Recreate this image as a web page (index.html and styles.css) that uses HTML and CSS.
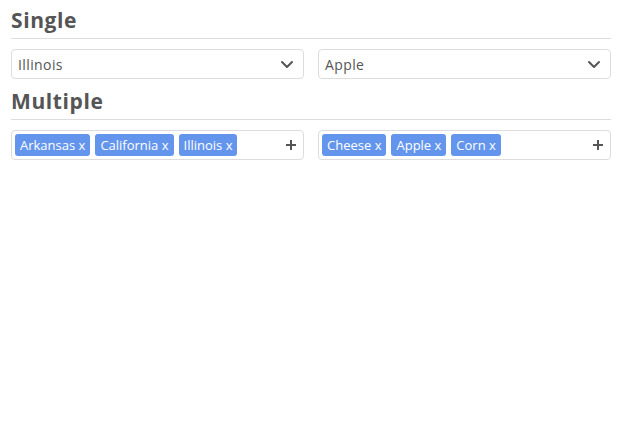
FILE: index.html
```html
<!DOCTYPE html>
<html>
<head>
<meta charset="utf-8">
<link rel="stylesheet" href="styles.css">
</head>
<body>
<main class="page">
  <h2 class="title">Single</h2>
  <div class="row">
    <div class="box select">
      <span class="value">Illinois</span>
      <svg class="chev" width="14" height="9" viewBox="0 0 14 9"><path d="M2 2 L7 7 L12 2" fill="none" stroke="#555" stroke-width="2" stroke-linecap="round" stroke-linejoin="round"/></svg>
    </div>
    <div class="box select">
      <span class="value">Apple</span>
      <svg class="chev" width="14" height="9" viewBox="0 0 14 9"><path d="M2 2 L7 7 L12 2" fill="none" stroke="#555" stroke-width="2" stroke-linecap="round" stroke-linejoin="round"/></svg>
    </div>
  </div>
  <h2 class="title">Multiple</h2>
  <div class="row">
    <div class="box multi">
      <span class="tag">Arkansas <span class="x">x</span></span>
      <span class="tag">California <span class="x">x</span></span>
      <span class="tag">Illinois <span class="x">x</span></span>
      <svg class="plus" width="12" height="12" viewBox="0 0 12 12"><path d="M6 1 V11 M1 6 H11" stroke="#555" stroke-width="2" fill="none"/></svg>
    </div>
    <div class="box multi">
      <span class="tag">Cheese <span class="x">x</span></span>
      <span class="tag">Apple <span class="x">x</span></span>
      <span class="tag">Corn <span class="x">x</span></span>
      <svg class="plus" width="12" height="12" viewBox="0 0 12 12"><path d="M6 1 V11 M1 6 H11" stroke="#555" stroke-width="2" fill="none"/></svg>
    </div>
  </div>
</main>
</body>
</html>
```

FILE: styles.css
```css
html, body {
  margin: 0;
  padding: 0;
  background: #fff;
}
body {
  font-family: "Open Sans", "DejaVu Sans", sans-serif;
  color: #555;
}
.page {
  padding: 6px 13px 0 11px;
  display: flex;
  flex-direction: column;
}
.title {
  margin: 0;
  font-size: 21px;
  font-weight: 700;
  letter-spacing: 0.6px;
  line-height: 28px;
  color: #555;
  padding-bottom: 4px;
  border-bottom: 1px solid #ddd;
  margin-bottom: 10px;
}
.row {
  display: grid;
  grid-template-columns: 1fr 1fr;
  gap: 14px;
  margin-bottom: 8px;
}
.box {
  box-sizing: border-box;
  height: 30px;
  border: 1px solid #ddd;
  border-radius: 4px;
  display: flex;
  align-items: center;
}
.select {
  padding: 0 9px 0 6px;
  font-size: 14px;
  letter-spacing: 0.4px;
}
.value { flex: 1; }
.multi {
  padding: 0 6px 0 3px;
  gap: 5px;
}
.tag {
  background: #6495ed;
  color: #fff;
  font-size: 13px;
  height: 22px;
  line-height: 22px;
  padding: 0 5px;
  border-radius: 3px;
}
.plus { margin-left: auto; }
```
